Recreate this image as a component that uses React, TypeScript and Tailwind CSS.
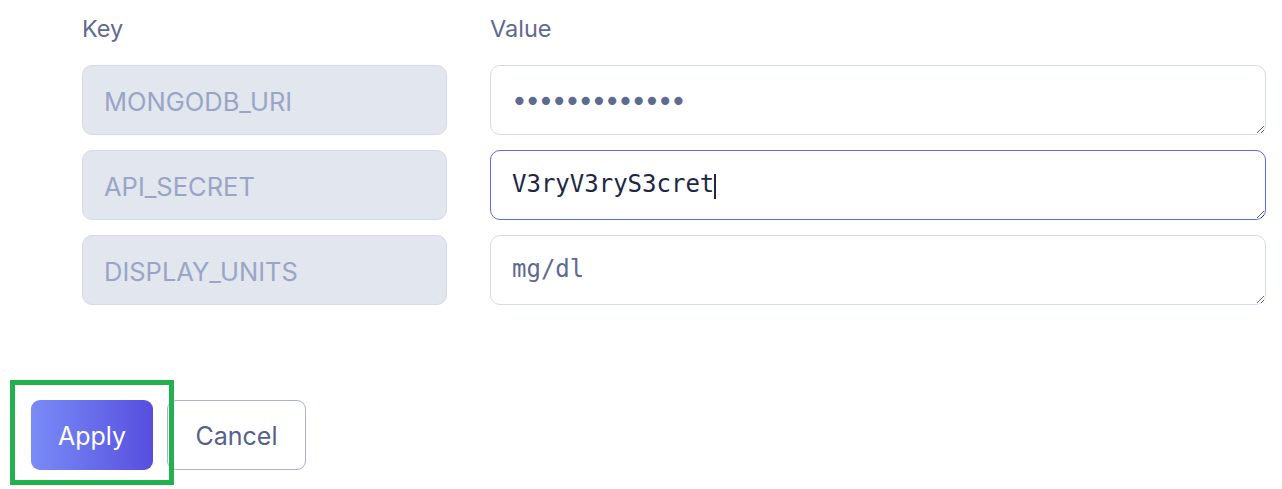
import React from 'react';

const rows = [
  { key: 'MONGODB_URI', value: '•••••••••••••', secret: true },
  { key: 'API_SECRET', value: 'V3ryV3ryS3cret', focused: true },
  { key: 'DISPLAY_UNITS', value: 'mg/dl' },
];

export default function App() {
  return (
    <div className="w-[1282px] h-[489px] bg-white font-['Inter','Liberation_Sans',sans-serif] overflow-hidden">
      {/* Key / Value grid */}
      <div className="grid grid-cols-[365px_1fr] gap-x-[43px] gap-y-[15px] pl-[82px] pr-[16px] pt-[11px]">
        <div className="text-[23.5px] text-[#5f6a91] h-[39px]">Key</div>
        <div className="text-[23.5px] text-[#5f6a91] h-[39px]">Value</div>

        {rows.map((row) => (
          <React.Fragment key={row.key}>
            <div className="h-[70px] flex items-center px-[21px] pt-[4px] rounded-[10px] bg-[#e2e6ef] border border-[#d5dbe8] text-[25.5px] text-[#9aa5c5]">
              {row.key}
            </div>
            <div className="relative h-[70px]">
              <textarea
                readOnly
                value={row.value}
                className={`block w-full h-[70px] rounded-[10px] bg-white border px-[21px] leading-[36px] font-['DejaVu_Sans_Mono',monospace] outline-none caret-transparent ${
                  row.focused ? 'border-[#5b6cea] text-[#1d2642]' : 'border-[#d5dce9] text-[#5f6a91]'
                } ${row.secret ? 'text-[28px] tracking-[-3.6px] pt-[18px] pl-[20px]' : 'text-[24px] pt-[15px]'}`}
              />
              {row.focused && (
                <span className="absolute left-[224px] top-[24px] w-[2px] h-[25px] bg-[#1d2642]" />
              )}
            </div>
          </React.Fragment>
        ))}
      </div>

      {/* Actions */}
      <div className="flex items-center gap-[14px] pl-[31px] mt-[95px]">
        <span className="relative">
          <button className="w-[122px] h-[70px] pt-[4px] rounded-[9px] bg-gradient-to-r from-[#7a8bf6] to-[#584ddf] text-white text-[25px]">
            Apply
          </button>
          <span className="absolute -left-[21px] -top-[20px] w-[164px] h-[105px] border-[5px] border-[#22b14c] pointer-events-none" />
        </span>
        <button className="w-[139px] h-[70px] pt-[4px] rounded-[9px] bg-white border border-[#aab1d2] text-[#56618a] text-[25px]">
          Cancel
        </button>
      </div>
    </div>
  );
}
